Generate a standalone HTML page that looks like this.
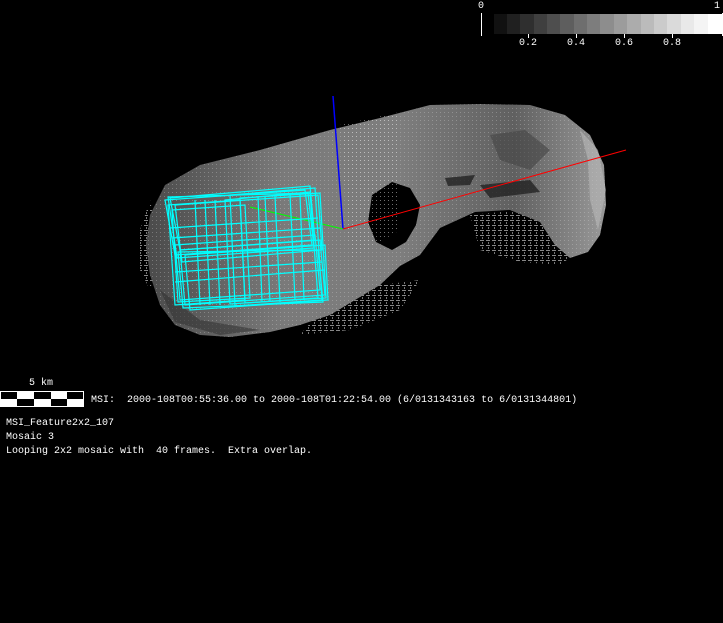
<!DOCTYPE html>
<html><head><meta charset="utf-8"><style>
html,body{margin:0;padding:0;background:#000;}
body{width:723px;height:623px;position:relative;overflow:hidden;font-family:"Liberation Mono","DejaVu Sans Mono",monospace;color:#fff;font-size:10px;}
.t{position:absolute;white-space:pre;line-height:12px;}
</style></head><body>
<svg width="723" height="623" style="position:absolute;left:0;top:0">
<defs>
<linearGradient id="g" x1="0" y1="0" x2="1" y2="0">
<stop offset="0" stop-color="#4a4a4a"/><stop offset="0.3" stop-color="#7a7a7a"/><stop offset="0.55" stop-color="#7e7e7e"/><stop offset="0.8" stop-color="#606060"/><stop offset="1" stop-color="#999"/>
</linearGradient>
<pattern id="dots" width="4" height="4" patternUnits="userSpaceOnUse"><rect width="1" height="1" fill="#ddd"/></pattern>
<pattern id="sp" width="6" height="5" patternUnits="userSpaceOnUse"><rect width="4" height="1" fill="#888"/><rect x="2" y="2" width="1" height="2" fill="#777"/></pattern>
</defs>
<!-- colorbar -->
<g>
<rect x="494" y="14" width="14" height="20" fill="#111"/><rect x="507" y="14" width="14" height="20" fill="#202020"/><rect x="520" y="14" width="14" height="20" fill="#2f2f2f"/><rect x="534" y="14" width="14" height="20" fill="#3f3f3f"/><rect x="547" y="14" width="14" height="20" fill="#4e4e4e"/><rect x="560" y="14" width="14" height="20" fill="#5e5e5e"/><rect x="574" y="14" width="14" height="20" fill="#6e6e6e"/><rect x="587" y="14" width="14" height="20" fill="#7d7d7d"/><rect x="600" y="14" width="14" height="20" fill="#8d8d8d"/><rect x="614" y="14" width="14" height="20" fill="#9c9c9c"/><rect x="627" y="14" width="14" height="20" fill="#acacac"/><rect x="641" y="14" width="14" height="20" fill="#bbbbbb"/><rect x="654" y="14" width="14" height="20" fill="#cbcbcb"/><rect x="667" y="14" width="14" height="20" fill="#dadada"/><rect x="681" y="14" width="14" height="20" fill="#e9e9e9"/><rect x="694" y="14" width="14" height="20" fill="#f4f4f4"/><rect x="708" y="14" width="15" height="20" fill="#fff"/>
<rect x="481" y="13" width="1" height="23" fill="#fff"/><rect x="722" y="13" width="1" height="23" fill="#fff"/>
<rect x="528" y="34" width="1" height="4" fill="#fff"/><rect x="576" y="34" width="1" height="4" fill="#fff"/><rect x="624" y="34" width="1" height="4" fill="#fff"/><rect x="672" y="34" width="1" height="4" fill="#fff"/>
</g>
<!-- speckled fringe areas -->
<path d="M470,215 L520,210 L560,215 L580,250 L560,265 L520,262 L480,250 Z" fill="url(#sp)"/>
<path d="M330,300 L380,285 L420,280 L400,310 L350,330 L300,335 Z" fill="url(#sp)"/>
<path d="M140,230 L150,200 L160,250 L150,290 L140,270 Z" fill="url(#sp)"/>
<!-- asteroid -->
<path d="M150,215 L165,185 L200,165 L260,150 L330,130 L380,118 L430,105 L480,104 L530,105 L565,115 L590,135 L604,165 L606,205 L600,235 L588,252 L570,258 L555,245 L540,222 L510,210 L475,212 L440,228 L420,255 L400,266 L380,285 L355,300 L330,315 L300,325 L270,332 L230,337 L200,335 L175,325 L160,305 L150,275 L146,245 Z" fill="url(#g)"/>
<path d="M150,215 L165,185 L200,165 L260,150 L330,130 L380,118 L430,105 L480,104 L530,105 L565,115 L590,135 L604,165 L606,205 L600,235 L588,252 L570,258 L555,245 L540,222 L510,210 L475,212 L440,228 L420,255 L400,266 L380,285 L355,300 L330,315 L300,325 L270,332 L230,337 L200,335 L175,325 L160,305 L150,275 L146,245 Z" fill="url(#dots)" opacity="0.3"/>
<path d="M372,195 L392,182 L410,188 L420,205 L416,225 L406,242 L392,250 L376,242 L368,222 Z" fill="#000"/>
<path d="M490,135 L525,130 L550,150 L530,170 L500,160 Z" fill="#444" opacity="0.6"/>
<path d="M480,185 L530,180 L540,192 L490,198 Z" fill="#222" opacity="0.8"/>
<path d="M445,178 L475,175 L470,185 L448,186 Z" fill="#222" opacity="0.8"/>
<path d="M160,290 L200,320 L260,330 L220,335 L175,322 Z" fill="#333" opacity="0.6"/>
<path d="M580,130 L598,150 L606,190 L598,230 L590,200 L588,160 Z" fill="#bbb" opacity="0.55"/>
<path d="M340,125 L400,112 L400,230 L350,260 Z" fill="url(#dots)" opacity="0.5"/>
<!-- axes -->
<line x1="333" y1="96" x2="343" y2="229" stroke="#00f" stroke-width="1.5"/>
<line x1="343" y1="229" x2="626" y2="150" stroke="#f00" stroke-width="1"/>
<line x1="343" y1="229" x2="250" y2="207" stroke="#0f0" stroke-width="1"/>
<!-- cyan frames -->
<g fill="none" stroke="#0ff" stroke-width="1.2">
<path d="M165,200 L305,190 L312,245 L175,255 Z"/>
<path d="M170,198 L310,186 L315,240 L180,250 Z"/>
<path d="M175,205 L318,195 L322,250 L182,262 Z"/>
<path d="M168,197 L308,193 L314,248 L177,258 Z"/>
<path d="M180,250 L320,240 L325,295 L185,305 Z"/>
<path d="M175,245 L315,235 L320,290 L180,300 Z"/>
<path d="M185,255 L325,245 L328,300 L190,310 Z"/>
<path d="M178,252 L318,250 L323,302 L183,308 Z"/>
<path d="M230,195 L315,188 L322,300 L235,306 Z"/>
<path d="M225,200 L310,192 L318,298 L230,304 Z"/>
<path d="M240,198 L320,193 L326,298 L245,303 Z"/>
<path d="M168,205 L240,200 L245,300 L175,305 Z"/>
<path d="M172,210 L245,205 L250,298 L178,302 Z"/>
<line x1="195" y1="200" x2="200" y2="305"/><line x1="205" y1="200" x2="210" y2="305"/><line x1="215" y1="200" x2="220" y2="305"/><line x1="258" y1="196" x2="262" y2="302"/><line x1="265" y1="196" x2="270" y2="302"/><line x1="275" y1="196" x2="280" y2="302"/><line x1="290" y1="194" x2="295" y2="300"/><line x1="300" y1="194" x2="304" y2="300"/>
<line x1="170" y1="228" x2="318" y2="218"/><line x1="175" y1="272" x2="322" y2="262"/><line x1="175" y1="282" x2="324" y2="270"/><line x1="172" y1="238" x2="320" y2="228"/>
</g>
<!-- scale bar -->
<rect x="0.5" y="391.5" width="83" height="15" fill="#fff" stroke="#fff"/>
<rect x="1" y="392" width="16" height="7" fill="#000"/><rect x="34" y="392" width="17" height="7" fill="#000"/><rect x="67" y="392" width="16" height="7" fill="#000"/>
<rect x="17" y="399" width="17" height="7" fill="#000"/><rect x="51" y="399" width="16" height="7" fill="#000"/>
</svg>
<div class="t" style="left:478px;top:1px">0</div>
<div class="t" style="left:714px;top:1px">1</div>
<div class="t" style="left:519px;top:38px">0.2</div>
<div class="t" style="left:567px;top:38px">0.4</div>
<div class="t" style="left:615px;top:38px">0.6</div>
<div class="t" style="left:663px;top:38px">0.8</div>
<div class="t" style="left:29px;top:378px">5 km</div>
<div class="t" style="left:91px;top:395px">MSI:  2000-108T00:55:36.00 to 2000-108T01:22:54.00 (6/0131343163 to 6/0131344801)</div>
<div class="t" style="left:6px;top:418px">MSI_Feature2x2_107</div>
<div class="t" style="left:6px;top:432px">Mosaic 3</div>
<div class="t" style="left:6px;top:446px">Looping 2x2 mosaic with  40 frames.  Extra overlap.</div>
</body></html>
